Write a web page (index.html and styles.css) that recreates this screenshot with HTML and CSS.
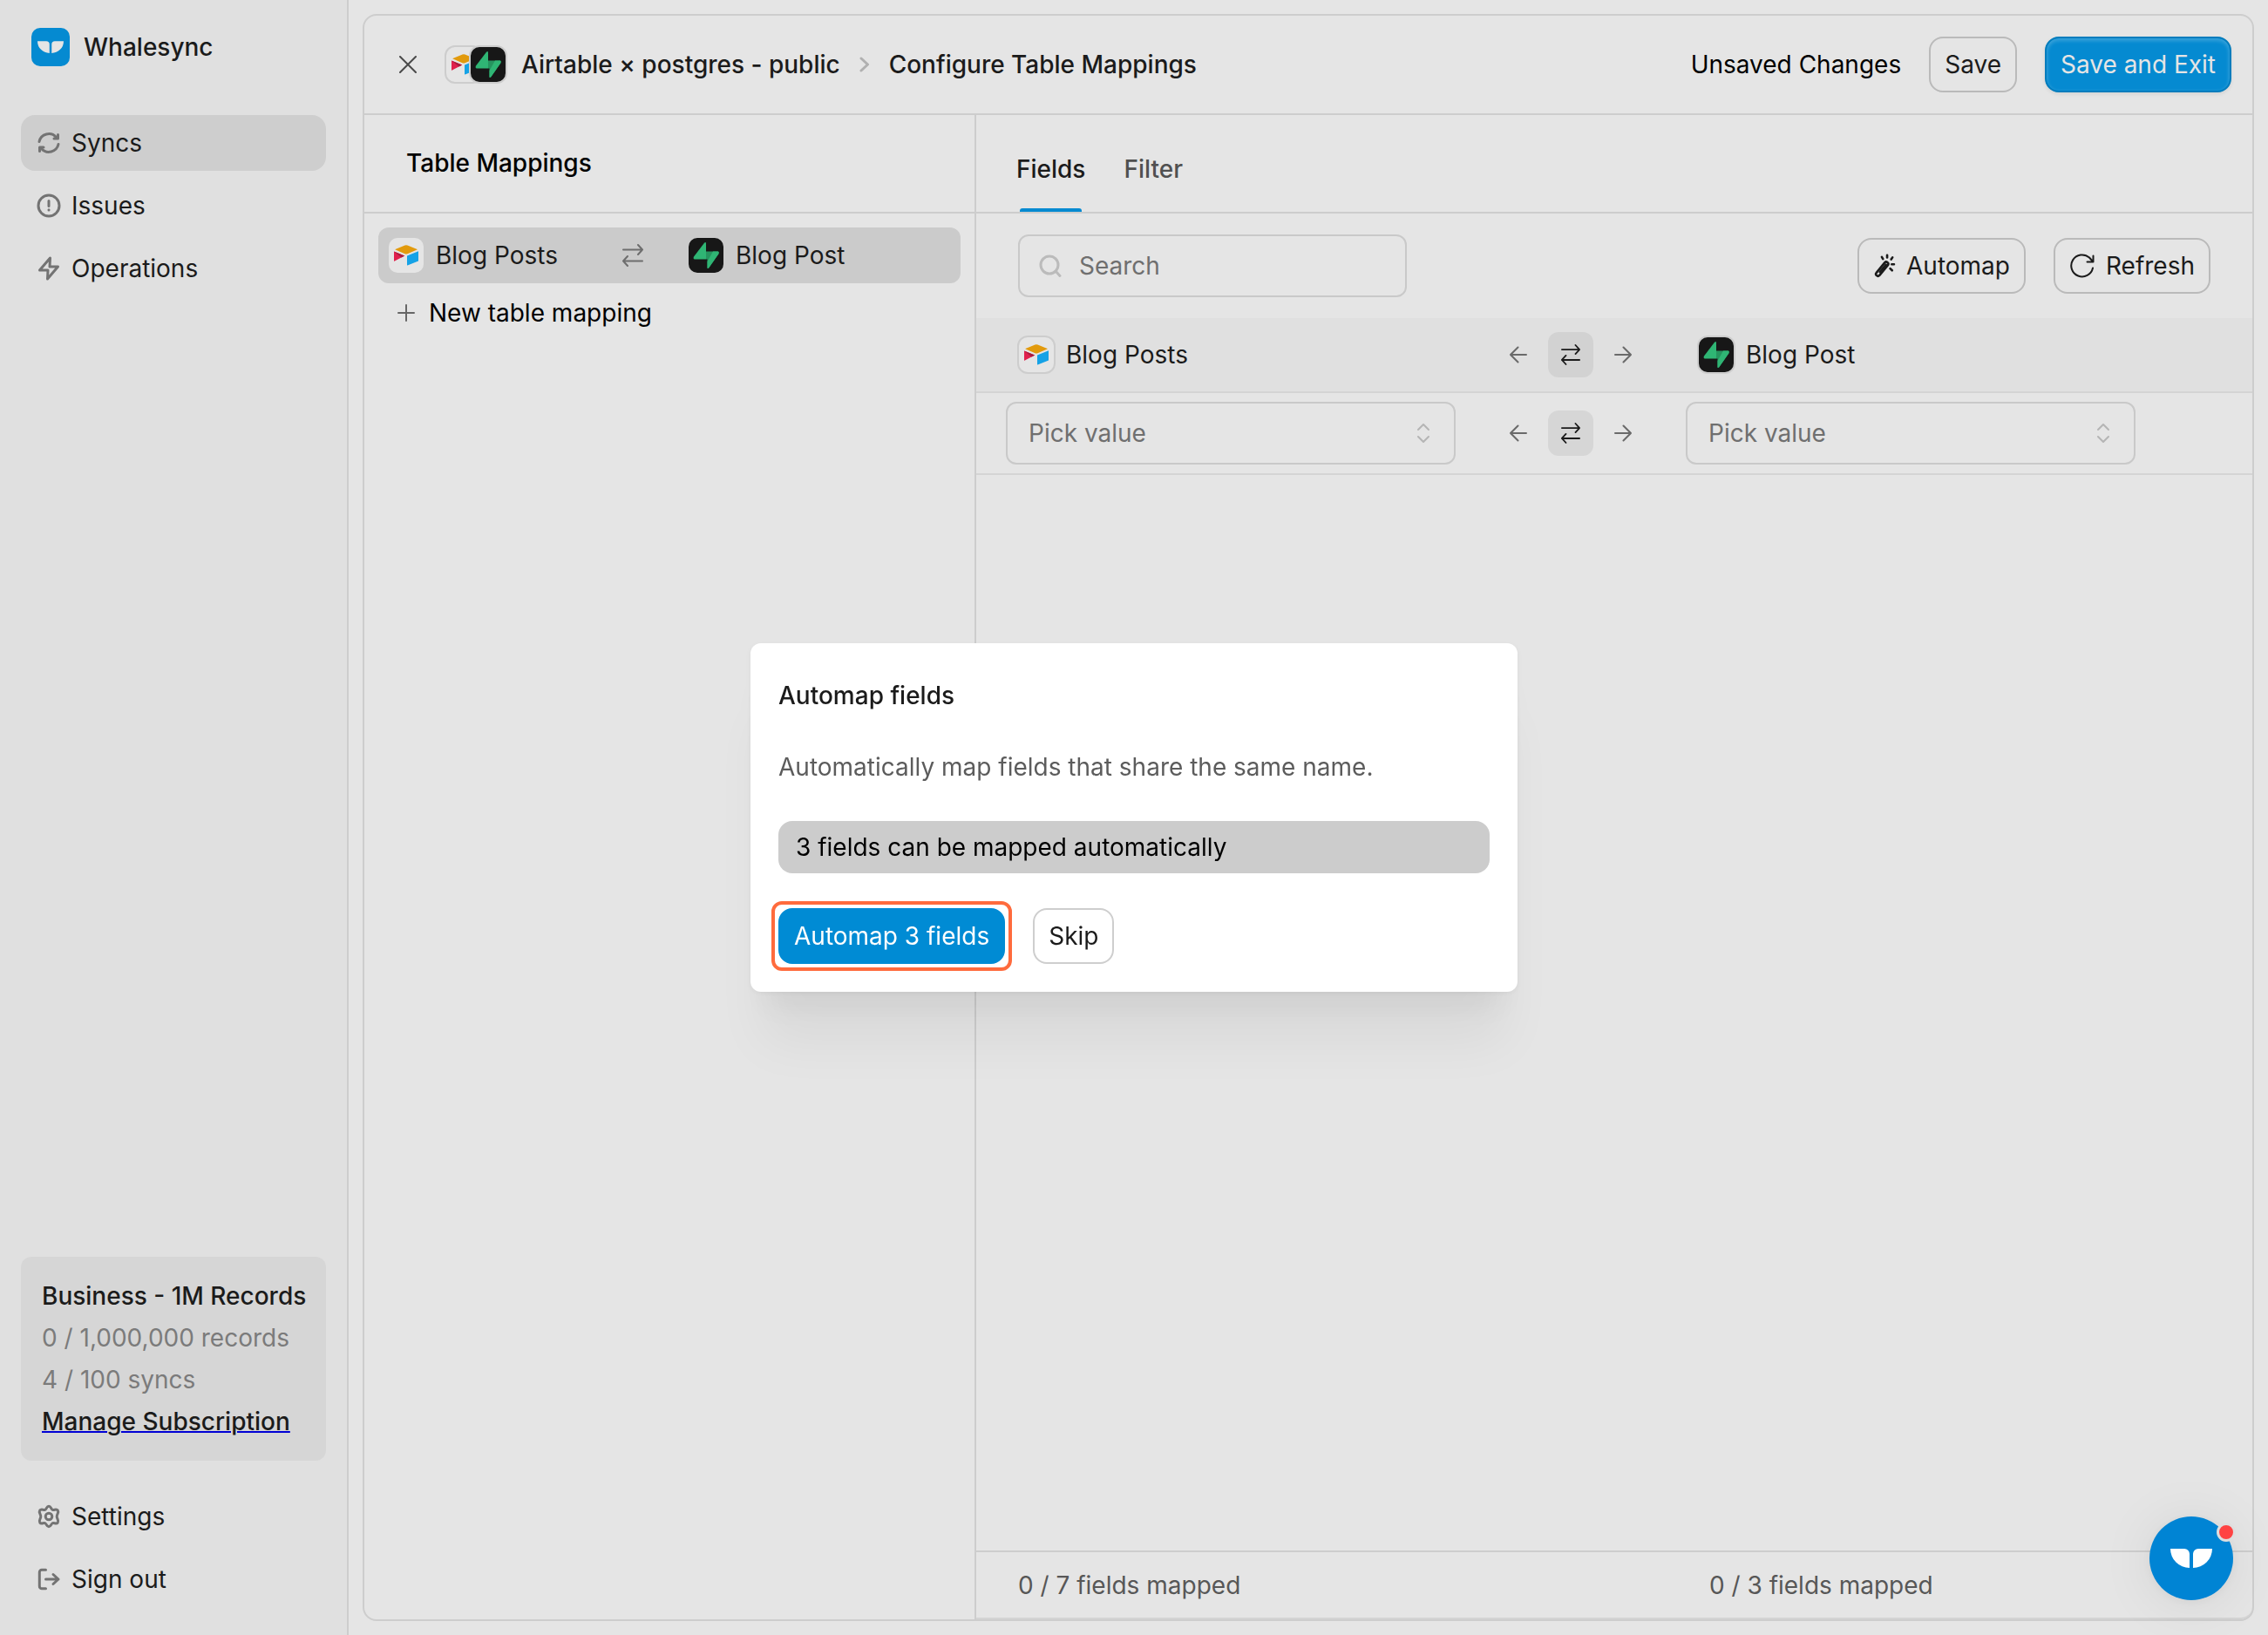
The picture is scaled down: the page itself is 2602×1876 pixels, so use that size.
FILE: index.html
```html
<!DOCTYPE html>
<html lang="en">

<head>
    <meta charset="UTF-8">
    <meta name="viewport" content="width=device-width, initial-scale=1.0">
    <title>Whalesync</title>
    <link rel="stylesheet" href="styles.css">
</head>

<body>
    <!-- shared icons -->
    <svg class="sprite" aria-hidden="true">
        <symbol id="whale" viewBox="0 0 48 22">
            <path fill="currentColor" d="M0 0H16A6 6 0 0 1 22 6V22A22 22 0 0 1 0 0ZM48 0H32A6 6 0 0 0 26 6V22A22 22 0 0 0 48 0Z"/>
        </symbol>
        <symbol id="airtable" viewBox="0 0 28 24">
            <path fill="#e29a0c" d="M12.500 .5Q14 0 15.500 .5L26.500 5Q27 5.300 26.500 5.600L15.500 10.200Q14 10.800 12.500 10.200L1.600 5.600Q1 5.300 1.600 5Z"/>
            <path fill="#15a2e6" d="M15 12.400L28 7.200V18.500L15.500 23.400Q15 23.500 15 23Z"/>
            <path fill="#e0204c" d="M0 7.600L12.200 12.400L.8 18.600Q0 19 0 18.200Z"/>
            <path fill="#a81c3e" d="M0 7.600L12.200 12.400L8.500 14.400Z"/>
        </symbol>
        <symbol id="supabase" viewBox="0 0 40 40">
            <path fill="#26945f" d="M20 15.500H34Q35.500 16.500 34.300 18.500L23.300 34.300Q21.500 35.800 21.500 34V24.500H20Z"/>
            <path fill="#2fb574" d="M28 15.500H34Q35.500 16.500 34.300 18.500L23.300 34.300Q21.500 35.800 21.500 34V27Z"/>
            <path fill="#2fb574" d="M20 6.200V24.500H6.500Q4.800 23.500 6 21.500L18 5.800Q19.800 4.200 20 6.200Z"/>
        </symbol>
        <symbol id="swap" viewBox="0 0 24 26">
            <path class="line" d="M1 6.500H23M18 1L23 6.500L18 12M23 19.500H1M6 14L1 19.500L6 25"/>
        </symbol>
        <symbol id="arrow-left" viewBox="0 0 20 20">
            <path class="line" d="M19 10H1M9.500 1.500L1 10L9.500 18.500"/>
        </symbol>
        <symbol id="arrow-right" viewBox="0 0 20 20">
            <path class="line" d="M1 10H19M10.500 1.500L19 10L10.500 18.500"/>
        </symbol>
        <symbol id="selector" viewBox="0 0 14 22">
            <path class="line" d="M1 7L7 1L13 7M1 15L7 21L13 15"/>
        </symbol>
    </svg>

    <div class="app">
        <aside class="sidebar">
            <div class="brand">
                <span class="logo"><svg width="30" height="14"><use href="#whale"/></svg></span>
                <span>Whalesync</span>
            </div>

            <nav class="nav">
                <a class="nav_item current" href="#">
                    <svg class="thick" width="28" height="28" viewBox="0 0 28 28"><path d="M3 12.500A11.300 11.300 0 0 1 22.500 7.500M25 15.500A11.300 11.300 0 0 1 5.500 20.500"/><path d="M24.500 4.500V9H20M3.500 23.500V19H8"/></svg>
                    Syncs
                </a>
                <a class="nav_item" href="#">
                    <svg class="thick" width="28" height="28" viewBox="0 0 28 28"><circle cx="14" cy="14" r="12"/><path d="M14 8.500V14.500M14 18.800V19"/></svg>
                    Issues
                </a>
                <a class="nav_item" href="#">
                    <svg class="thick" width="28" height="28" viewBox="0 0 28 28"><path d="M15.500 2L3.500 16H13L12.500 26L24.500 12H15Z"/></svg>
                    Operations
                </a>
            </nav>

            <div class="plan">
                <strong>Business - 1M Records</strong>
                <span>0 / 1,000,000 records</span>
                <span>4 / 100 syncs</span>
                <a href="#"><strong>Manage Subscription</strong></a>
            </div>

            <nav class="nav">
                <a class="nav_item" href="#">
                    <svg class="thick" width="28" height="28" viewBox="0 0 28 28"><path d="M14 2.200C16.500 2.200 16.600 5.600 18.400 6.300C20.200 7 22.600 4.700 24.300 7C25.900 9.300 23.200 11 23.200 14C23.200 17 25.900 18.700 24.300 21C22.600 23.300 20.200 21 18.400 21.700C16.600 22.400 16.500 25.800 14 25.800C11.500 25.800 11.400 22.400 9.600 21.700C7.800 21 5.400 23.300 3.700 21C2.100 18.700 4.800 17 4.800 14C4.800 11 2.100 9.300 3.700 7C5.400 4.700 7.800 7 9.600 6.300C11.400 5.600 11.500 2.200 14 2.200Z"/><circle cx="14" cy="14" r="3.800"/></svg>
                    Settings
                </a>
                <a class="nav_item" href="#">
                    <svg class="thick" width="28" height="28" viewBox="0 0 28 28"><path d="M10.500 3.200H6A2.700 2.700 0 0 0 3.300 6V22A2.700 2.700 0 0 0 6 24.800H10.500M10.500 14H25M19 8.500L25 14L19 19.500"/></svg>
                    Sign out
                </a>
            </nav>
        </aside>

        <main class="frame">
            <header class="topbar">
                <button class="close" type="button" aria-label="Close">
                    <svg width="20" height="20" viewBox="0 0 20 20"><path class="line" d="M1 1L19 19M19 1L1 19"/></svg>
                </button>
                <span class="pair">
                    <span class="source"><svg width="28" height="24"><use href="#airtable"/></svg></span>
                    <span class="source dark"><svg width="40" height="40"><use href="#supabase"/></svg></span>
                </span>
                <a class="crumb" href="#">Airtable × postgres - public</a>
                <svg class="crumb_arrow" width="12" height="18" viewBox="0 0 12 18"><path d="M2 2L9.500 9L2 16"/></svg>
                <h1>Configure Table Mappings</h1>
                <div class="actions">
                    <span>Unsaved Changes</span>
                    <button class="btn" type="button">Save</button>
                    <button class="btn primary raised" type="button">Save and Exit</button>
                </div>
            </header>

            <div class="panes">
                <section class="tables">
                    <h2>Table Mappings</h2>
                    <div class="table_list">
                        <a class="table_row" href="#">
                            <span class="table_name">
                                <span class="source plain"><svg width="28" height="24"><use href="#airtable"/></svg></span>
                                Blog Posts
                            </span>
                            <svg class="row_swap" width="24" height="26"><use href="#swap"/></svg>
                            <span class="table_name">
                                <span class="source plain dark"><svg width="40" height="40"><use href="#supabase"/></svg></span>
                                Blog Post
                            </span>
                        </a>
                        <button class="new_table" type="button">
                            <svg width="20" height="20" viewBox="0 0 20 20"><path class="line" d="M10 1V19M1 10H19"/></svg>
                            New table mapping
                        </button>
                    </div>
                </section>

                <section class="fields">
                    <div class="tabs" role="tablist">
                        <button class="tab current" type="button" role="tab" aria-selected="true">Fields</button>
                        <button class="tab" type="button" role="tab" aria-selected="false">Filter</button>
                    </div>

                    <div class="tools">
                        <label class="search">
                            <svg width="26" height="28" viewBox="0 0 26 28"><circle cx="12" cy="13" r="10"/><path d="M19 20L24 25.500"/></svg>
                            <input type="text" placeholder="Search" aria-label="Search">
                        </label>
                        <div class="tool_buttons">
                            <button class="btn" type="button">
                                <svg class="wand" width="26" height="28" viewBox="0 0 28 32"><path d="M3.500 25L14.500 11.500Q16 10 17.800 11.500Q20 13.200 18.500 15L7.500 28.500Q5.500 30.500 3.500 28.500Q1.700 27 3.500 25Z"/><path class="thin" d="M17.500 2V5M10.500 4.500L12 7M24.500 5L22.800 7.500M23.500 14H26.500M21.500 19.500L24 22M8 24L16 14.500"/></svg>
                                Automap
                            </button>
                            <button class="btn" type="button">
                                <svg width="30" height="30" viewBox="0 0 30 30"><path class="line" d="M27 17.500A12.500 12.500 0 1 1 23 5.500L27 10M27.500 3.500V10.500H20.500"/></svg>
                                Refresh
                            </button>
                        </div>
                    </div>

                    <div class="map_row map_head">
                        <span class="map_title">
                            <span class="source"><svg width="28" height="24"><use href="#airtable"/></svg></span>
                            Blog Posts
                        </span>
                        <span class="direction">
                            <button type="button" aria-label="Left"><svg width="20" height="20"><use href="#arrow-left"/></svg></button>
                            <button class="on" type="button" aria-label="Both"><svg width="22" height="24"><use href="#swap"/></svg></button>
                            <button type="button" aria-label="Right"><svg width="20" height="20"><use href="#arrow-right"/></svg></button>
                        </span>
                        <span class="map_title">
                            <span class="source dark"><svg width="40" height="40"><use href="#supabase"/></svg></span>
                            Blog Post
                        </span>
                    </div>

                    <div class="map_row">
                        <label class="picker">
                            <select aria-label="Airtable field"><option>Pick value</option></select>
                            <svg width="14" height="22"><use href="#selector"/></svg>
                        </label>
                        <span class="direction">
                            <button type="button" aria-label="Left"><svg width="20" height="20"><use href="#arrow-left"/></svg></button>
                            <button class="on" type="button" aria-label="Both"><svg width="22" height="24"><use href="#swap"/></svg></button>
                            <button type="button" aria-label="Right"><svg width="20" height="20"><use href="#arrow-right"/></svg></button>
                        </span>
                        <label class="picker">
                            <select aria-label="Postgres field"><option>Pick value</option></select>
                            <svg width="14" height="22"><use href="#selector"/></svg>
                        </label>
                    </div>

                    <footer class="counts">
                        <span>0 / 7 fields mapped</span>
                        <span>0 / 3 fields mapped</span>
                    </footer>
                </section>
            </div>
        </main>
    </div>

    <div class="overlay">
        <div class="modal" role="dialog" aria-modal="true" aria-labelledby="modal_title">
            <h2 id="modal_title">Automap fields</h2>
            <p class="lead">Automatically map fields that share the same name.</p>
            <p class="notice">3 fields can be mapped automatically</p>
            <div class="modal_actions">
                <button class="btn primary focused" type="button">Automap 3 fields</button>
                <button class="btn light" type="button">Skip</button>
            </div>
        </div>
    </div>

    <button class="chat" type="button" aria-label="Open chat">
        <svg width="48" height="22"><use href="#whale"/></svg>
        <span class="badge"></span>
    </button>
</body>

</html>
```

FILE: styles.css
```css
* {
    margin: 0px;
    padding: 0px;
    box-sizing: border-box;
}

body {
    font: 28px/40px Inter, "Liberation Sans", sans-serif;
    color: #1b1b1b;
    background-color: #e5e5e5;
}

a {
    color: inherit;
    text-decoration: none;
}

button,
input,
select {
    font: inherit;
    color: inherit;
    border: none;
    background: none;
}

button {
    cursor: pointer;
}

h1,
h2,
strong {
    font-size: 28px;
    font-weight: 500;
}

svg {
    flex: none;
    fill: none;
    stroke-linecap: round;
    stroke-linejoin: round;
}

.sprite {
    position: absolute;
    width: 0px;
    height: 0px;
}

.line {
    fill: none;
    stroke: currentColor;
    stroke-width: 2;
}

.app {
    display: flex;
    height: 100vh;
}


/* ------------------------- sidebar ------------------------- */
.sidebar {
    flex: none;
    display: flex;
    flex-direction: column;
    width: 400px;
    padding: 32px 24px;
    background-color: #e0e0e0;
    border-right: 2px solid #cdcdcd;
}

.brand {
    display: flex;
    align-items: center;
    gap: 16px;
    padding-left: 12px;
    margin-bottom: 56px;
    font-weight: 500;
}

.logo {
    display: flex;
    align-items: center;
    justify-content: center;
    width: 44px;
    height: 44px;
    border-radius: 10px;
    color: #e5e5e5;
    background-color: #058ad1;
}

.nav {
    display: flex;
    flex-direction: column;
    gap: 8px;
}

.nav_item {
    display: flex;
    align-items: center;
    gap: 12px;
    height: 64px;
    padding: 0px 18px;
    border-radius: 16px;
}

.nav_item.current {
    background-color: #cecece;
}

.thick {
    stroke: #737373;
    stroke-width: 3;
}

.plan {
    display: flex;
    flex-direction: column;
    margin: auto 0px 32px;
    padding: 21px 24px;
    border-radius: 12px;
    line-height: 48px;
    color: #7b7b7b;
    background-color: #d6d6d6;
    white-space: nowrap;
}

.plan strong {
    color: #1b1b1b;
}

.plan a {
    text-decoration: underline;
    text-decoration-color: #0000d4;
    text-decoration-thickness: 2px;
}


/* ------------------------- frame and top bar ------------------------- */
.frame {
    flex: 1;
    display: flex;
    flex-direction: column;
    min-width: 0px;
    margin: 16px;
    border: 2px solid #cdcdcd;
    border-radius: 16px;
}

.topbar {
    display: flex;
    align-items: center;
    height: 114px;
    padding: 0px 24px 0px 40px;
    border-bottom: 2px solid #cdcdcd;
}

.crumb {
    font-weight: 500;
}

.close {
    display: flex;
    margin-right: 32px;
    color: #4a4a4a;
}

.pair {
    display: flex;
    margin-right: 16px;
}

.source {
    flex: none;
    display: flex;
    align-items: center;
    justify-content: center;
    width: 44px;
    height: 44px;
    border: 2px solid #cdcdcd;
    border-radius: 12px;
    background-color: #e5e5e5;
}

.source.dark {
    background-color: #171717;
}

.source.plain {
    width: 40px;
    height: 40px;
    border: none;
    border-radius: 10px;
}

.pair .dark {
    margin-left: -16px;
}

.crumb_arrow {
    margin: 0px 22px;
    stroke: #b0b0b0;
    stroke-width: 3;
}

.actions {
    display: flex;
    align-items: center;
    gap: 32px;
    margin-left: auto;
    color: #000;
}

.btn {
    display: flex;
    align-items: center;
    gap: 12px;
    height: 64px;
    padding: 0px 16px;
    border: 2px solid #bababa;
    border-radius: 16px;
    color: #1b1b1b;
    white-space: nowrap;
}

.btn.primary {
    color: #fff;
    background-color: #008bd4;
    border-color: #008bd4;
}

.btn.raised {
    color: #e5e5e5;
    background-color: #058ad1;
    border-color: #017cbd;
    box-shadow: inset 0 2px 4px 1px rgba(255, 255, 255, 0.2), 0 2px 4px rgba(0, 0, 0, 0.08);
}

.btn.light {
    border-color: #cecece;
}


/* ------------------------- table mappings ------------------------- */
.panes {
    flex: 1;
    display: flex;
    min-height: 0px;
}

.tables {
    flex: none;
    width: 702px;
    border-right: 2px solid #cdcdcd;
}

.tables h2 {
    height: 113px;
    padding: 0px 48px;
    border-bottom: 2px solid #cdcdcd;
    line-height: 111px;
    color: #000;
}

.table_list {
    padding: 16px;
}

.table_row {
    display: flex;
    align-items: center;
    gap: 40px;
    height: 64px;
    padding: 0px 12px;
    border-radius: 12px;
    background-color: #cbcbcb;
}

.table_name {
    display: flex;
    align-items: center;
    gap: 14px;
}

.table_name:first-child {
    width: 228px;
}

.row_swap {
    margin-right: 12px;
    color: #6e6e6e;
}

.new_table {
    display: flex;
    align-items: center;
    gap: 16px;
    height: 68px;
    padding: 0px 22px;
    color: #000;
}

.new_table svg {
    color: #666;
}


/* ------------------------- fields ------------------------- */
.fields {
    flex: 1;
    display: flex;
    flex-direction: column;
    min-width: 0px;
}

.tabs {
    display: flex;
    gap: 44px;
    height: 113px;
    padding: 12px 46px 0px;
    border-bottom: 2px solid #cdcdcd;
    color: #505050;
}

.tab {
    position: relative;
    font-weight: 500;
}

.tab.current {
    color: #1b1b1b;
}

.tab.current::after {
    content: "";
    position: absolute;
    left: 4px;
    right: 4px;
    bottom: 0px;
    height: 4px;
    border-radius: 3px 3px 0px 0px;
    background-color: #058ad1;
}

.tools {
    display: flex;
    align-items: center;
    justify-content: space-between;
    padding: 24px 48px;
}

.search {
    display: flex;
    align-items: center;
    gap: 20px;
    width: 446px;
    height: 72px;
    padding: 0px 22px;
    border: 2px solid #c9c9c9;
    border-radius: 12px;
}

.search svg {
    stroke: #bbb;
    stroke-width: 3;
}

.search input {
    flex: 1;
    min-width: 0px;
    outline: none;
}

.search input::placeholder {
    color: #6f6f6f;
    opacity: 1;
}

.tool_buttons {
    display: flex;
    gap: 32px;
}

.wand {
    stroke: #1b1b1b;
    stroke-width: 3;
}

.map_row {
    display: grid;
    grid-template-columns: 1fr 172px 1fr;
    align-items: center;
    gap: 46px;
    height: 94px;
    padding: 0px 134px 0px 34px;
    border-bottom: 2px solid #d4d4d4;
}

.map_head {
    height: 86px;
    background-color: #e0e0e0;
}

.map_title {
    display: flex;
    align-items: center;
    gap: 12px;
    padding-left: 13px;
}

.direction {
    display: flex;
    gap: 8px;
}

.direction button {
    display: flex;
    align-items: center;
    justify-content: center;
    width: 52px;
    height: 52px;
    border-radius: 12px;
    color: #6a6a6a;
}

.direction .on {
    color: #1b1b1b;
    background-color: #d6d6d6;
}

.map_head .on {
    background-color: #d2d2d2;
}

.picker {
    display: flex;
    align-items: center;
    height: 72px;
    padding-right: 28px;
    border: 2px solid #c9c9c9;
    border-radius: 12px;
    color: #b5b5b5;
}

.picker select {
    flex: 1;
    min-width: 0px;
    height: 68px;
    padding-left: 24px;
    appearance: none;
    color: #6f6f6f;
}

.counts {
    display: grid;
    grid-template-columns: 14fr 11fr;
    align-items: center;
    height: 79px;
    margin-top: auto;
    padding-left: 48px;
    border-top: 2px solid #cdcdcd;
    border-bottom: 2px solid #d4d4d4;
    border-radius: 0px 0px 14px 0px;
    color: #575757;
}


/* ------------------------- modal ------------------------- */
.overlay {
    position: fixed;
    inset: 0px;
    display: flex;
    align-items: center;
    justify-content: center;
}

.modal {
    width: 880px;
    padding: 40px 32px 32px;
    border-radius: 12px;
    background-color: #fff;
    box-shadow: 0 2px 6px rgba(0, 0, 0, 0.05), 0 72px 56px -14px rgba(0, 0, 0, 0.05), 0 34px 34px -14px rgba(0, 0, 0, 0.05);
}

.lead {
    margin: 42px 0px;
    color: #5c5c5c;
}

.notice {
    margin-bottom: 40px;
    padding: 10px 20px;
    border-radius: 16px;
    color: #000;
    background-color: #cccccc;
}

.modal_actions {
    display: flex;
    gap: 32px;
}

.focused {
    position: relative;
}

/* ring round the main action */
.focused::after {
    content: "";
    position: absolute;
    inset: -10px;
    border: 4px solid #ff6b3d;
    border-radius: 12px;
}


/* ------------------------- chat ------------------------- */
.chat {
    position: fixed;
    right: 40px;
    bottom: 40px;
    display: flex;
    align-items: center;
    justify-content: center;
    width: 96px;
    height: 96px;
    border-radius: 50%;
    color: #fff;
    background-color: #0084d4;
    box-shadow: 0 2px 12px rgba(0, 0, 0, 0.06), 0 4px 64px rgba(0, 0, 0, 0.08);
}

.badge {
    position: absolute;
    top: 7px;
    right: -3px;
    width: 22px;
    height: 22px;
    border: 3px solid #dedede;
    border-radius: 50%;
    background-color: #ff4343;
}
```
